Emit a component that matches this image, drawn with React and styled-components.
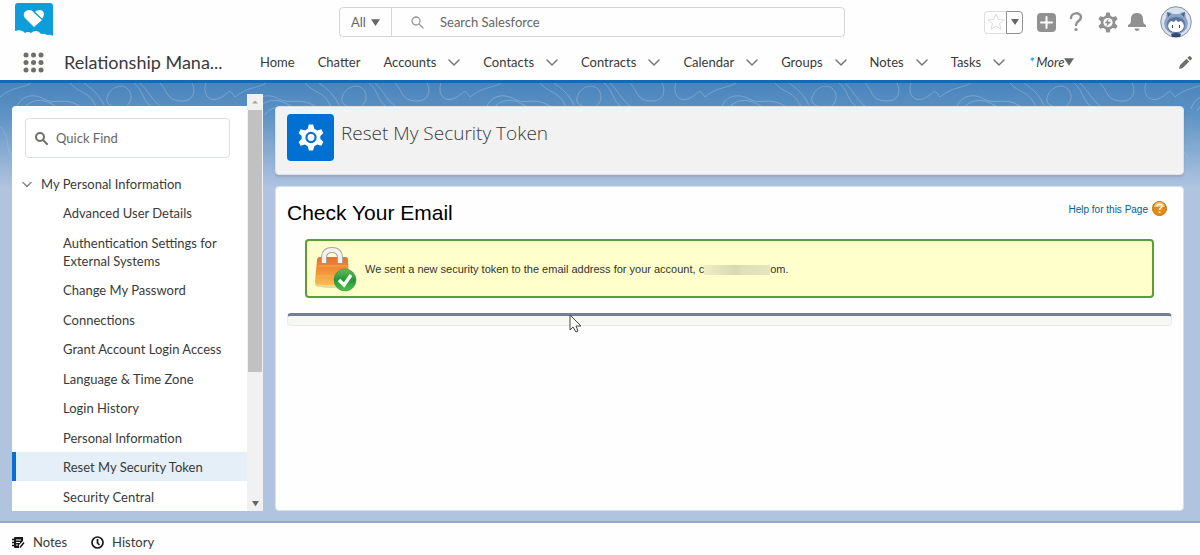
import styled, { createGlobalStyle } from "styled-components";

const topoLines = encodeURIComponent(
  `<svg xmlns="http://www.w3.org/2000/svg" width="235" height="110" viewBox="0 0 235 110" fill="none" stroke="#ffffff" stroke-opacity=".22">
    <path d="M0 14C14 2 26 6 33 -2M16 26C20 12 34 10 44 16S64 14 78 22 92 32 86 44"/>
    <path d="M22 28C28 17 40 15 50 20S68 30 62 42M30 32C36 22 46 24 52 30S56 40 50 44"/>
    <path d="M70 0C78 10 88 8 94 20S104 28 112 24M84 0C92 6 98 10 104 22"/>
    <path d="M108 12C112 2 126 0 130 9S126 27 118 25 104 20 108 12Z"/>
    <path d="M134 0C144 8 142 18 152 24S166 32 168 44M140 0C152 12 154 22 166 26"/>
    <path d="M160 0C168 8 166 17 180 18S196 8 192 0M206 0C202 12 210 20 220 15S228 4 235 14"/>
    <path d="M0 44C12 54 4 64 12 74" stroke-opacity=".12"/>
  </svg>`
);

const GlobalStyle = createGlobalStyle`
  * {
    box-sizing: border-box;
  }
  body {
    margin: 0;
    background-color: #fdfefd;
    color: #3a3a3a;
    font-family: Lato, "Open Sans", sans-serif;
    font-size: 13px;
    line-height: 18px;
  }
  button, input, select {
    font: inherit;
    color: inherit;
  }
  button {
    display: flex;
    align-items: center;
    padding: 0;
    border: none;
    background: none;
  }
  svg {
    display: block;
    flex: none;
  }
  h1, h2, p, ul {
    margin: 0;
    padding: 0;
    font-weight: 400;
  }
  ul {
    list-style: none;
  }
  a {
    color: inherit;
    text-decoration: none;
  }
`;

const Page = styled.div`
  display: flex;
  flex-direction: column;
  min-height: 100vh;
`;

const TopBar = styled.header`
  display: grid;
  grid-template-columns: 339fr 506fr 355fr;
  height: 44px;
`;
const LogoLink = styled.a`
  padding: 3px 15px;
`;
const GlobalSearch = styled.form`
  display: flex;
  height: 30px;
  margin-top: 7px;
  border: 1px solid #d4d5d5;
  border-radius: 4px;
  color: #666;
`;
const Scope = styled.label`
  display: flex;
  align-items: center;
  width: 52px;
  padding-left: 11px;
  border-right: 1px solid #d4d5d5;
`;
const ScopeSelect = styled.select`
  width: 20px;
  padding: 0;
  border: none;
  background: none;
  appearance: none;
`;
const SearchLabel = styled.label`
  display: flex;
  flex: 1;
  align-items: center;
  gap: 16px;
  padding-left: 19px;
`;
const TextInput = styled.input`
  flex: 1;
  min-width: 0;
  padding: 0;
  border: none;
  outline: none;
  background: none;

  &::placeholder {
    color: #666;
    opacity: 1;
  }
`;
const Tools = styled.div`
  display: flex;
  justify-content: flex-end;
  align-items: center;
  padding-right: 8px;
  color: #919191;
`;
const ToolButton = styled.button`
  justify-content: center;
  width: ${({ $width }) => $width}px;
  height: 34px;
`;
const ProfileButton = styled.button`
  margin-left: 11px;
`;
const Favorites = styled.div`
  display: flex;
  height: 23px;
  margin-right: 8px;
`;
const StarButton = styled.button`
  justify-content: center;
  width: 22px;
  border: 1px solid #dedede;
  border-right: none;
  border-radius: 4px 0 0 4px;
  color: #ddd;
`;
const StarMenuButton = styled.button`
  justify-content: center;
  width: 17px;
  border: 1px solid #919191;
  border-radius: 0 4px 4px 0;
  color: #706e6b;
`;

const NavBar = styled.nav`
  display: flex;
  align-items: center;
  height: 39px;
  padding: 0 8px 0 23px;
  border-bottom: 3px solid #0f6cbb;
`;
const AppName = styled.span`
  width: 196px;
  margin-left: 20px;
  font-size: 18px;
  line-height: 24px;
`;
const Tabs = styled.ul`
  display: flex;
  flex: 1;
  gap: 23px;
`;
const Tab = styled.li`
  display: flex;
  align-items: center;
  gap: 12px;
`;
const ChevronButton = styled.button`
  color: #706e6b;
`;
const MoreButton = styled.button`
  font-style: italic;
`;
const Unsaved = styled.span`
  width: 8px;
  color: #1589ee;
  font-style: normal;
`;

const Stage = styled.main`
  display: flex;
  flex: 1;
  gap: 12px;
  padding: 11px 16px 10px 12px;
  background-color: #b0c4df;
  background-image: url("data:image/svg+xml,${topoLines}"),
    linear-gradient(#4a84bb 0, #5c92c4 30px, #b0c4df 105px);
  background-repeat: repeat-x, no-repeat;
`;

const Sidebar = styled.aside`
  display: flex;
  width: 251px;
`;
const SetupPanel = styled.div`
  display: flex;
  flex: 1;
  flex-direction: column;
  margin-top: 12px;
  border-radius: 4px 0 0 0;
  background-color: #fff;
`;
const QuickFind = styled.label`
  display: flex;
  align-items: center;
  gap: 8px;
  height: 40px;
  margin: 12px 17px 12px 13px;
  padding: 0 9px;
  border: 1px solid #d8dde6;
  border-radius: 4px;
  color: #666;
`;
const SectionButton = styled.button`
  gap: 9px;
  width: 100%;
  height: 28px;
  padding-left: 10px;
`;
const SetupList = styled.ul`
  display: flex;
  flex: 1;
  flex-direction: column;
  justify-content: space-between;
`;
const SetupLink = styled.a`
  display: block;
  padding: 6px 24px 5px 47px;
  border-left: 4px solid ${({ $active }) => ($active ? "#0b6fd0" : "transparent")};
  background-color: ${({ $active }) => ($active ? "#e4eff8" : "transparent")};
`;
const ScrollTrack = styled.div`
  display: flex;
  flex-direction: column;
  align-items: center;
  width: 16px;
  background-color: #f1f1f1;
`;
const ScrollArrow = styled.span`
  display: flex;
  align-items: center;
  justify-content: center;
  height: 16px;
  color: ${({ $dim }) => ($dim ? "#a3a3a3" : "#505050")};
`;
const ScrollThumb = styled.div`
  flex: 68;
  width: 14px;
  background-color: #c1c1c1;
`;
const ScrollRest = styled.div`
  flex: 32;
`;

const Content = styled.div`
  display: flex;
  flex: 1;
  flex-direction: column;
  gap: 11px;
  padding-top: 12px;
`;
const PageHeader = styled.div`
  display: flex;
  gap: 7px;
  height: 69px;
  padding: 7px 11px;
  border: 1px solid #e0e1e6;
  border-radius: 4px;
  background-color: #f3f2f2;
  box-shadow: 0 2px 2px rgba(0, 0, 0, 0.1);
`;
const HeaderIcon = styled.span`
  display: flex;
  align-items: center;
  justify-content: center;
  width: 47px;
  height: 47px;
  border-radius: 4px;
  background-color: #0070d2;
`;
const PageTitle = styled.h1`
  padding-top: 7px;
  font-family: "Open Sans", sans-serif;
  font-size: 19px;
  font-weight: 300;
  line-height: 24px;
`;
const Card = styled.section`
  flex: 1;
  padding: 12px 11px 16px;
  border: 1px solid #d5e0ef;
  border-radius: 4px;
  background-color: #fdfefd;
  font-family: "Liberation Sans", Arial, sans-serif;
`;
const CardHeader = styled.div`
  display: flex;
  justify-content: space-between;
`;
const CardTitle = styled.h2`
  color: #000;
  font-size: 21px;
  line-height: 28px;
`;
const HelpLink = styled.a`
  display: flex;
  gap: 4px;
  padding: 2px 5px 0 0;
  color: #015ba7;
  font-size: 10px;
`;
const Message = styled.div`
  display: flex;
  align-items: center;
  gap: 7px;
  height: 59px;
  margin: 12px 18px 15px;
  padding-left: 7px;
  border: 2px solid #5c9e31;
  border-radius: 4px;
  background-color: #ffffcc;
  color: #333;
  font-size: 11px;
`;
const Redacted = styled.span`
  display: inline-block;
  width: 66px;
  height: 10px;
  background: linear-gradient(90deg, #efefc4, #e0e0b8 30%, #d8d8b2 50%, #e0e0b8 60%, #e6e6bd);
  vertical-align: middle;
`;
const EmptyBlock = styled.div`
  position: relative;
  height: 13px;
  border: 1px solid #eaeaea;
  border-top: 3px solid #747e96;
  border-radius: 4px;
  background-color: #f6f8f6;
`;
const Pointer = styled.svg`
  position: absolute;
  top: -2px;
  left: 281px;
`;

const UtilityBar = styled.footer`
  display: flex;
  gap: 24px;
  height: 34px;
  padding: 0 12px;
  border-top: 2px solid #94a9c6;
  background-color: #fdfefd;
`;
const UtilityButton = styled.button`
  gap: 8px;
  padding-top: 6px;
`;

const tabs = [
  { label: "Home" },
  { label: "Chatter" },
  { label: "Accounts", menu: true },
  { label: "Contacts", menu: true },
  { label: "Contracts", menu: true },
  { label: "Calendar", menu: true },
  { label: "Groups", menu: true },
  { label: "Notes", menu: true },
  { label: "Tasks", menu: true },
];

const setupLinks = [
  "Advanced User Details",
  "Authentication Settings for External Systems",
  "Change My Password",
  "Connections",
  "Grant Account Login Access",
  "Language & Time Zone",
  "Login History",
  "Personal Information",
  "Reset My Security Token",
  "Security Central",
];

const gearPath =
  "M10 0h4l1 4 2.6 1.5L21.500 4.400l2 3.500-2.900 2.800v2.600l2.900 2.800-2 3.500-3.900-1.100L15 20l-1 4h-4l-1-4-2.600-1.500-3.900 1.100-2-3.500 2.900-2.800v-2.600L.5 7.900l2-3.500 3.900 1.100L9 4Z";

const Logo = () => (
  <svg width="38" height="34" viewBox="0 0 38 34">
    <path
      fill="#0d9ddb"
      d="M3 0h32q3 0 3 3v30q-3-2-6-1-3-2-6-1-2-3-5-3-3 0-5 2-3-2-6 0-3-4-10-2V3q0-3 3-3Z"
    />
    <path fill="#fff" d="M19 24 10 15c-3-4 0-8 4-8 3 0 5 2 5 3l8 7Z" />
    <path fill="#fff" d="M20 9c2-3 9-3 9 2 0 2-1 3-2 5Z" />
    <path stroke="#0d9ddb" d="m18 8 9 8" />
  </svg>
);

const Caret = ({ size = 8, up }) => (
  <svg width={size} height={size} viewBox="0 0 8 8" fill={up ? "currentColor" : "#666"}>
    <path d={up ? "M0 6h8L4 2Z" : "M0 1h8L4 7Z"} />
  </svg>
);

const Chevron = ({ size = 12 }) => (
  <svg width={size} height={size} viewBox="0 0 12 12" fill="none" stroke="#777" strokeWidth="1.500">
    <path d="m1 4 5 5 5-5" strokeLinecap="round" />
  </svg>
);

const Magnifier = ({ weight = 1.3, color = "#999" }) => (
  <svg width="13" height="13" viewBox="0 0 13 13" fill="none" stroke={color} strokeWidth={weight}>
    <circle cx="5" cy="5" r="4" />
    <path d="m8 8 4 4" strokeLinecap="round" />
  </svg>
);

const Launcher = () => (
  <svg width="21" height="21" viewBox="0 0 21 21" fill="#706e6b">
    {[3, 10.5, 18].map((y) => [3, 10.5, 18].map((x) => <circle key={`${x}-${y}`} cx={x} cy={y} r="2.500" />))}
  </svg>
);

const Avatar = () => (
  <svg width="32" height="32" viewBox="0 0 32 32">
    <circle cx="16" cy="16" r="15.300" fill="#d7e2f1" stroke="#8b8f99" />
    <path fill="#8ba3c7" d="M7 6q4 0 6 2h6q2-2 6-2l1 6q3 4 1 10-4 6-11 6T5 22q-2-6 1-10Z" />
    <path fill="#4c658f" d="m7 6 4 2-3 3ZM25 6l-4 2 3 3Z" />
    <path fill="#5d769f" d="M7 19q0-8 9-8t9 8q0 8-9 8t-9-8Z" />
    <path fill="#fff" d="M8 20l1-3 2-2 3 1 2-2 2 2 3-1 2 2 1 3q-1 6-8 6t-8-6Z" />
    <path fill="#34496e" d="M12 19h1v3h-1zM19 19h1v3h-1zM12 31l-1-3q5-2 10 0l-1 3Z" />
  </svg>
);

const Lock = () => (
  <svg width="44" height="48" viewBox="0 0 44 48">
    <defs>
      <linearGradient id="body" x1="0" y1="0" x2="0" y2="1">
        <stop offset="0" stopColor="#e5702f" />
        <stop offset=".5" stopColor="#f09236" />
        <stop offset="1" stopColor="#f7c155" />
      </linearGradient>
      <linearGradient id="badge" x1="0" y1="0" x2="0" y2="1">
        <stop offset="0" stopColor="#65bb61" />
        <stop offset=".5" stopColor="#249536" />
        <stop offset="1" stopColor="#4cc44d" />
      </linearGradient>
    </defs>
    <ellipse cx="17" cy="40" rx="16" ry="3" fill="#a8a276" opacity=".4" />
    <path fill="url(#body)" d="M3 15q0-3 3-3h25q3 0 3 3l1 22q0 3-3 3H4q-3 0-3-3Z" />
    <path fill="none" stroke="#f7b56a" d="M4 21h30M3 31h31" opacity=".7" />
    <path fill="none" stroke="#a5a5a5" strokeWidth="6" d="M10 18v-5q0-8 8-8t8 8v5" />
    <path fill="none" stroke="#f2f2f2" strokeWidth="4" d="M10 18v-5q0-8 8-8t8 8v5" />
    <circle cx="31" cy="35" r="11" fill="url(#badge)" stroke="#28853a" strokeWidth=".5" />
    <path fill="none" stroke="#f3fff0" strokeWidth="3.500" d="m25 35 5 5 7-10" />
  </svg>
);

const App = () => {
  return (
    <Page>
      <GlobalStyle />
      <TopBar>
        <LogoLink href="#" aria-label="Salesforce home">
          <Logo />
        </LogoLink>
        <GlobalSearch>
          <Scope>
            <ScopeSelect aria-label="Search scope">
              <option>All</option>
            </ScopeSelect>
            <Caret size={9} />
          </Scope>
          <SearchLabel>
            <Magnifier />
            <TextInput type="search" aria-label="Search Salesforce" placeholder="Search Salesforce" />
          </SearchLabel>
        </GlobalSearch>
        <Tools>
          <Favorites>
            <StarButton aria-label="Favorite">
              <svg width="18" height="18" viewBox="0 0 18 18" fill="none" stroke="currentColor">
                <path d="m9 1 2.200 5.500 5.800.3-4.500 3.700 1.500 5.700L9 13l-5 3.200 1.500-5.700L1 6.800l5.800-.3Z" />
              </svg>
            </StarButton>
            <StarMenuButton aria-label="Favorites list">
              <Caret />
            </StarMenuButton>
          </Favorites>
          <ToolButton $width={30} aria-label="Create">
            <svg width="19" height="19" viewBox="0 0 19 19">
              <rect width="19" height="19" rx="4" fill="currentColor" />
              <path d="M9.500 4v11M4 9.500h11" stroke="#fff" strokeWidth="2" strokeLinecap="round" />
            </svg>
          </ToolButton>
          <ToolButton $width={30} aria-label="Help">
            <svg width="14" height="20" viewBox="0 0 14 20" fill="none" stroke="currentColor" strokeWidth="2.500">
              <path d="M2 6c0-6 10-6 10-1 0 4-5 4-5 8" strokeLinecap="round" />
              <circle cx="7" cy="17.500" r="1.600" fill="currentColor" stroke="none" />
            </svg>
          </ToolButton>
          <ToolButton $width={34} aria-label="Setup">
            <svg width="20" height="21" viewBox="0 0 24 24" fill="currentColor">
              <path d={gearPath} />
              <circle cx="12" cy="12" r="5.500" fill="#fff" />
              <path d="m13 7-5 6h3l-1 4 6-6h-4Z" />
            </svg>
          </ToolButton>
          <ToolButton $width={24} aria-label="Notifications">
            <svg width="18" height="18" viewBox="0 0 18 18" fill="currentColor">
              <path d="M9 0c5 0 6 3 6 7 0 3 1 4 3 5v2H0v-2c2-1 3-2 3-5 0-4 1-7 6-7ZM6.500 15.500h5Q11 18 9 18t-2.500-2.500Z" />
            </svg>
          </ToolButton>
          <ProfileButton aria-label="View profile">
            <Avatar />
          </ProfileButton>
        </Tools>
      </TopBar>

      <NavBar>
        <button aria-label="App launcher">
          <Launcher />
        </button>
        <AppName>Relationship Mana...</AppName>
        <Tabs>
          {tabs.map(({ label, menu }) => (
            <Tab key={label}>
              <a href="#">{label}</a>
              {menu && (
                <ChevronButton aria-label={`${label} list`}>
                  <Chevron />
                </ChevronButton>
              )}
            </Tab>
          ))}
          <Tab>
            <MoreButton>
              <Unsaved>*</Unsaved>
              More
              <Caret size={10} />
            </MoreButton>
          </Tab>
        </Tabs>
        <button aria-label="Edit navigation">
          <svg width="13" height="13" viewBox="0 0 14 14" fill="#706e6b">
            <path d="m0 14 1-4 7-7 3 3-7 7ZM9 2l1.500-1.500q1-1 2 0l1 1q1 1 0 2L12 5Z" />
          </svg>
        </button>
      </NavBar>

      <Stage>
        <Sidebar>
          <SetupPanel>
            <QuickFind>
              <Magnifier weight={2} color="#706e6b" />
              <TextInput type="search" aria-label="Quick Find" placeholder="Quick Find" />
            </QuickFind>
            <SectionButton>
              <Chevron size={10} />
              My Personal Information
            </SectionButton>
            <SetupList>
              {setupLinks.map((label) => (
                <li key={label}>
                  <SetupLink href="#" $active={label === "Reset My Security Token"}>
                    {label}
                  </SetupLink>
                </li>
              ))}
            </SetupList>
          </SetupPanel>
          <ScrollTrack>
            <ScrollArrow $dim>
              <Caret size={6} up />
            </ScrollArrow>
            <ScrollThumb />
            <ScrollRest />
            <ScrollArrow>
              <Caret size={7} />
            </ScrollArrow>
          </ScrollTrack>
        </Sidebar>

        <Content>
          <PageHeader>
            <HeaderIcon>
              <svg width="26" height="27" viewBox="0 0 24 24">
                <path d={gearPath} fill="#fff" />
                <circle cx="12" cy="12" r="4.200" fill="#fff" stroke="#0070d2" strokeWidth="2" />
              </svg>
            </HeaderIcon>
            <PageTitle>Reset My Security Token</PageTitle>
          </PageHeader>
          <Card>
            <CardHeader>
              <CardTitle>Check Your Email</CardTitle>
              <HelpLink href="#">
                Help for this Page
                <svg width="15" height="15" viewBox="0 0 15 15">
                  <circle cx="7.500" cy="7.500" r="7" fill="#e58a12" stroke="#b96f19" />
                  <path d="M2 6q1-5 5.500-5T13 6Z" fill="#f6bd62" />
                  <path d="M5 5.500c0-3 5-3 5-.5 0 2-2.500 2-2.500 4M7.500 10.500v1.500" fill="none" stroke="#fff" strokeWidth="1.600" />
                </svg>
              </HelpLink>
            </CardHeader>
            <Message role="status">
              <Lock />
              <p>
                We sent a new security token to the email address for your account, c
                <Redacted />
                om.
              </p>
            </Message>
            <EmptyBlock>
              <Pointer width="13" height="19" viewBox="0 0 13 19">
                <path d="M1 1v15l3-3 3 5 2-1-2-5h5Z" fill="#fff" stroke="#444" />
              </Pointer>
            </EmptyBlock>
          </Card>
        </Content>
      </Stage>

      <UtilityBar>
        <UtilityButton>
          <svg width="13" height="13" viewBox="0 0 13 13">
            <path d="M3 1h8v4l-4 4v3H3q-1 0-1-1V2q0-1 1-1Z" fill="#181818" />
            <path d="M4 4h5M4 6.500h4M4 9h2" stroke="#fff" />
            <path d="M0 3.500h3M0 6.500h3M0 9.500h3M8 11.500l4-5" stroke="#181818" strokeWidth="1.500" />
          </svg>
          Notes
        </UtilityButton>
        <UtilityButton>
          <svg width="13" height="13" viewBox="0 0 13 13" fill="none" stroke="#181818" strokeWidth="1.700">
            <circle cx="6.500" cy="6.500" r="5.500" />
            <path d="M6.500 3v4l2 2" />
          </svg>
          History
        </UtilityButton>
      </UtilityBar>
    </Page>
  );
};

export default App;
